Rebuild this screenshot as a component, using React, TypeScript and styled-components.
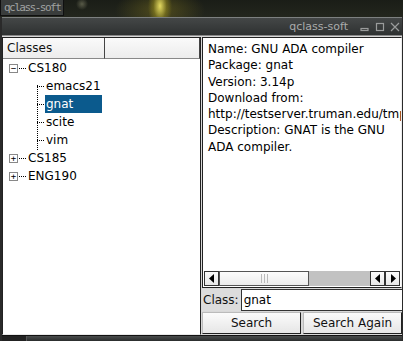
import styled, { createGlobalStyle } from 'styled-components'

const GlobalStyle = createGlobalStyle`
  html, body {
    margin: 0;
    padding: 0;
    background: #111;
    overflow: hidden;
  }
  body {
    font-family: "DejaVu Sans", sans-serif;
    font-size: 12px;
  }
`

const Screen = styled.div`
  width: 403px;
  height: 341px;
  display: flex;
  flex-direction: column;
  background: #0e0f0c;
  overflow: hidden;
`

const Wallpaper = styled.div`
  height: 17px;
  display: flex;
  align-items: flex-start;
  background:
    radial-gradient(ellipse 12px 24px at 160px 6px, rgba(235, 225, 100, 0.95), rgba(150, 140, 30, 0.5) 55%, transparent 100%),
    radial-gradient(ellipse 45px 22px at 160px 10px, rgba(120, 110, 30, 0.55), transparent 100%),
    radial-gradient(ellipse 6px 6px at 82px 4px, rgba(200, 200, 160, 0.35), transparent 100%),
    linear-gradient(#1a1d17, #23261d);
`

const DesktopTab = styled.div`
  height: 16px;
  width: 64px;
  box-sizing: border-box;
  padding: 0 0 0 3px;
  display: flex;
  align-items: center;
  background: #3a3d3c;
  border: 1px solid #101010;
  border-top: none;
  color: #a0a2a1;
  font-family: "DejaVu Sans Mono", monospace;
  font-size: 11px;
  letter-spacing: -1.5px;
`

const Window = styled.div`
  flex: 1;
  display: flex;
  flex-direction: column;
  background: #c8c8c8;
  border-left: 2px solid #2a2a2a;
  border-right: 1px solid #2a2a2a;
  min-height: 0;
`

const TitleBar = styled.div`
  height: 17px;
  display: flex;
  align-items: center;
  justify-content: flex-end;
  padding-right: 2px;
  background: linear-gradient(#444747, #2e3131);
  border-top: 1px solid #7d8080;
  border-bottom: 1px solid #8a8a8a;
  color: #a9abab;
  font-size: 11px;
`

const TitleText = styled.span`
  margin-right: 12px;
`

const TitleButtons = styled.div`
  display: flex;
  align-items: center;
  gap: 5px;
`

const Body = styled.div`
  flex: 1;
  min-height: 0;
  display: grid;
  grid-template-columns: 199px minmax(0, 1fr);
  gap: 1px;
  background: #d8d8d8;
  padding-top: 1px;
`

const TreePanel = styled.div`
  background: #fff;
  border: 1px solid #222;
  border-bottom-color: #e8e8e8;
  display: flex;
  flex-direction: column;
  min-width: 0;
`

const HeaderRow = styled.div`
  display: flex;
  height: 21px;
`

const HeaderCell = styled.div<{ $grow?: boolean }>`
  ${(p) => (p.$grow ? 'flex: 1;' : 'width: 97px;')}
  display: flex;
  align-items: center;
  padding-left: 4px;
  background: linear-gradient(#fafafa, #ececec);
  border-right: 1px solid #444;
  border-bottom: 1px solid #888;
  color: #111;
  font-size: 12px;
`

const Tree = styled.div`
  padding: 0 0 0 6px;
  display: flex;
  flex-direction: column;
`

const TreeRow = styled.div<{ $indent: number }>`
  height: 18px;
  display: flex;
  align-items: center;
  padding-left: ${(p) => p.$indent}px;
  position: relative;
  color: #000;
`

const Expander = styled.span`
  width: 7px;
  height: 7px;
  border: 1px solid #888;
  display: inline-flex;
  align-items: center;
  justify-content: center;
  font-size: 9px;
  line-height: 7px;
  background: #fff;
  margin-right: 1px;
  font-family: "DejaVu Sans Mono", monospace;
`

const Dots = styled.span`
  width: 7px;
  border-top: 1px dotted #000;
  margin-right: 1px;
`

const Label = styled.span<{ $selected?: boolean }>`
  padding: 0 2px 0 1px;
  line-height: 18px;
  height: 18px;
  ${(p) => (p.$selected ? 'background: #0b5a8d; color: #fff; width: 54px;' : '')}
`

const VLine = styled.div`
  position: absolute;
  border-left: 1px dotted #000;
`

const InfoPanel = styled.div`
  display: flex;
  flex-direction: column;
  gap: 1px;
  min-width: 0;
`

const InfoBox = styled.div`
  flex: 1;
  min-height: 0;
  background: #fff;
  border: 1px solid #222;
  border-right-color: #eee;
  display: flex;
  flex-direction: column;
`

const InfoText = styled.div`
  flex: 1;
  padding: 3px 0 0 5px;
  line-height: 16.3px;
  color: #000;
  white-space: nowrap;
  overflow: hidden;
`

const HScroll = styled.div`
  height: 15px;
  display: flex;
  background: #d4d4d4;
  border-top: 1px solid #fff;
  margin: 0 1px 1px 1px;
`

const ScrollArrow = styled.div`
  width: 15px;
  height: 15px;
  display: flex;
  align-items: center;
  justify-content: center;
  background: linear-gradient(#fbfbfb, #e8e8e8);
  border: 1px solid #333;
  box-sizing: border-box;
`

const Thumb = styled.div`
  width: 90px;
  background: linear-gradient(#fcfcfc, #ececec);
  border: 1px solid #555;
  box-sizing: border-box;
  display: flex;
  align-items: center;
  justify-content: center;
  gap: 2px;
`

const Grip = styled.span`
  width: 1px;
  height: 9px;
  background: #bbb;
`

const Track = styled.div`
  flex: 1;
  background: #c2c2c2;
`

const ClassRow = styled.div`
  height: 22px;
  display: flex;
  align-items: center;
  gap: 2px;
  background: #dcdcdc;
`

const ClassLabel = styled.span`
  padding-left: 1px;
  color: #111;
  font-size: 12px;
`

const ClassInput = styled.div`
  flex: 1;
  height: 20px;
  display: flex;
  align-items: center;
  padding-left: 2px;
  background: #fff;
  border: 1px solid #333;
  border-right: none;
  color: #000;
`

const ButtonRow = styled.div`
  display: grid;
  grid-template-columns: 1fr 1fr;
  gap: 2px;
  height: 22px;
  margin-bottom: 1px;
`

const Button = styled.div`
  display: flex;
  align-items: center;
  justify-content: center;
  background: linear-gradient(#fbfbfb, #e6e6e6);
  border: 1px solid #222;
  border-top-color: #bbb;
  border-left-color: #bbb;
  color: #111;
  font-size: 12px;
`

const Taskbar = styled.div`
  height: 5px;
  display: flex;
  background: linear-gradient(#4a4d4d, #2a2c2c);
  border-top: 1px solid #111;
`

const TaskStart = styled.div`
  width: 24px;
  background: #222;
  border-right: 1px solid #555;
`

function Arrow({ dir }: { dir: 'left' | 'right' }) {
  return (
    <svg width="6" height="9" viewBox="0 0 6 9">
      {dir === 'left' ? (
        <polygon points="5,0 5,9 0,4.5" fill="#000" />
      ) : (
        <polygon points="1,0 1,9 6,4.5" fill="#000" />
      )}
    </svg>
  )
}

function WinIcon({ kind }: { kind: 'min' | 'max' | 'close' }) {
  return (
    <svg width="10" height="10" viewBox="0 0 10 10" fill="none" stroke="#9a9c9c" strokeWidth="1.2">
      {kind === 'min' && <rect x="1" y="6.5" width="7" height="2" />}
      {kind === 'max' && <rect x="1.5" y="1.5" width="7" height="7" />}
      {kind === 'close' && <path d="M1 1 L9 9 M9 1 L1 9" />}
    </svg>
  )
}

export default function App() {
  return (
    <Screen>
      <GlobalStyle />
      <Wallpaper>
        <DesktopTab>qclass-soft</DesktopTab>
      </Wallpaper>
      <Window>
        <TitleBar>
          <TitleText>qclass-soft</TitleText>
          <TitleButtons>
            <WinIcon kind="min" />
            <WinIcon kind="max" />
            <WinIcon kind="close" />
          </TitleButtons>
        </TitleBar>
        <Body>
          <TreePanel>
            <HeaderRow>
              <HeaderCell>Classes</HeaderCell>
              <HeaderCell $grow />
            </HeaderRow>
            <Tree>
              <TreeRow $indent={0}>
                <Expander>−</Expander>
                <Dots />
                <Label>CS180</Label>
              </TreeRow>
              <TreeRow $indent={28}>
                <VLine style={{ left: 28, top: 8, height: 65 }} />
                <Dots />
                <Label>emacs21</Label>
              </TreeRow>
              <TreeRow $indent={28}>
                <Dots />
                <Label $selected>gnat</Label>
              </TreeRow>
              <TreeRow $indent={28}>
                <Dots />
                <Label>scite</Label>
              </TreeRow>
              <TreeRow $indent={28}>
                <Dots />
                <Label>vim</Label>
              </TreeRow>
              <TreeRow $indent={0}>
                <Expander>+</Expander>
                <Dots />
                <Label>CS185</Label>
              </TreeRow>
              <TreeRow $indent={0}>
                <Expander>+</Expander>
                <Dots />
                <Label>ENG190</Label>
              </TreeRow>
            </Tree>
          </TreePanel>
          <InfoPanel>
            <InfoBox>
              <InfoText>
                Name: GNU ADA compiler
                <br />
                Package: gnat
                <br />
                Version: 3.14p
                <br />
                Download from:
                <br />
                http://testserver.truman.edu/tmp/gnat
                <br />
                Description: GNAT is the GNU
                <br />
                ADA compiler.
              </InfoText>
              <HScroll>
                <ScrollArrow>
                  <Arrow dir="left" />
                </ScrollArrow>
                <Thumb>
                  <Grip />
                  <Grip />
                  <Grip />
                </Thumb>
                <Track />
                <ScrollArrow>
                  <Arrow dir="left" />
                </ScrollArrow>
                <ScrollArrow>
                  <Arrow dir="right" />
                </ScrollArrow>
              </HScroll>
            </InfoBox>
            <ClassRow>
              <ClassLabel>Class:</ClassLabel>
              <ClassInput>gnat</ClassInput>
            </ClassRow>
            <ButtonRow>
              <Button>Search</Button>
              <Button>Search Again</Button>
            </ButtonRow>
          </InfoPanel>
        </Body>
        <Taskbar>
          <TaskStart />
        </Taskbar>
      </Window>
    </Screen>
  )
}
